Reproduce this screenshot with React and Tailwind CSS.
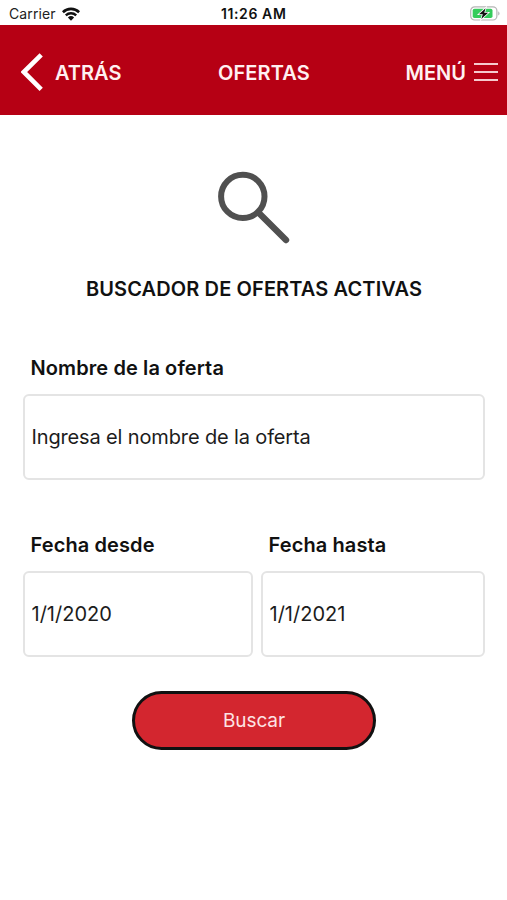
import React, { useState } from "react";

const StatusBar = () => (
  <div className="relative flex h-[25px] items-center justify-between bg-white pl-[9px] pr-[7px] pt-[2px]">
    <div className="flex items-center">
      <span className="text-[14px] leading-none tracking-[0.1px] text-[#222]">
        Carrier
      </span>
      <svg className="ml-[6px] h-[14px] w-[18px]" viewBox="0 0 18 14" fill="none">
        <path d="M0.9 5.2a11.6 11.6 0 0116.2 0" stroke="#111" strokeWidth="2.6" />
        <path d="M3.8 8.4a7.5 7.5 0 0110.4 0" stroke="#111" strokeWidth="2.4" />
        <path d="M9 13.7L5.9 10.5a4.5 4.5 0 016.2 0z" fill="#111" />
      </svg>
    </div>
    <span className="absolute left-[221px] top-[7px] text-[14px] font-semibold leading-none tracking-[0.6px] text-[#111]">
      11:26 AM
    </span>
    <svg className="h-[15px] w-[30px]" viewBox="0 0 30 15" fill="none">
      <rect x="0.7" y="0.8" width="26.2" height="13.2" rx="4" stroke="#b5b5b5" strokeWidth="1.2" />
      <path d="M28.2 5.2c1.8 0.8 1.8 3.6 0 4.4z" fill="#b5b5b5" />
      <rect x="2.7" y="2.7" width="19.8" height="9.4" rx="1.8" fill="#35cc5b" />
      <path
        d="M15.6 2.2L9 8.2h3.8l-1.5 4.8L18.1 6.8h-3.9z"
        fill="#111"
        stroke="#fff"
        strokeWidth="1.6"
        paintOrder="stroke"
      />
    </svg>
  </div>
);

const Header = () => (
  <header className="relative flex h-[90px] items-center justify-between bg-[#b60014] pl-[21px] pr-[9px] text-[20px] font-semibold leading-none text-[#fff0f1]">
    <button className="flex items-center pt-1">
      <svg className="h-[39px] w-[22px]" viewBox="0 0 22 39" fill="none">
        <path d="M20.2 1.8L2.8 19l17.4 17.4" stroke="#fff" strokeWidth="4.6" />
      </svg>
      <span className="ml-3 pt-[2px]">ATRÁS</span>
    </button>
    <h1 className="absolute left-[218px] top-[38px] tracking-[0.1px]">OFERTAS</h1>
    <button className="flex items-center pt-1">
      <span className="pt-[2px]">MENÚ</span>
      <svg className="ml-2 h-[18px] w-[24px]" viewBox="0 0 24 18" fill="none">
        <path d="M0 1h24M0 9h24M0 17h24" stroke="#f6c9cd" strokeWidth="1.8" />
      </svg>
    </button>
  </header>
);

const Field = ({ label, value, placeholder, onChange, className }) => (
  <label className={className}>
    <span className="block pl-[7.5px] text-[20px] font-semibold leading-[24px] tracking-[0.1px] text-[#111]">
      {label}
    </span>
    <input
      type="text"
      value={value}
      placeholder={placeholder}
      onChange={(e) => onChange(e.target.value)}
      className="mt-[14px] block h-[86px] w-full rounded-[6px] border-2 border-[#e4e4e4] px-[6.5px] text-[20px] text-[#1c1c1c] outline-none placeholder:tracking-[-0.14px] placeholder:text-[#1c1c1c]"
    />
  </label>
);

const App = () => {
  const [name, setName] = useState("");
  const [from, setFrom] = useState("1/1/2020");
  const [to, setTo] = useState("1/1/2021");

  return (
    <div className="h-[900px] w-[507px] overflow-hidden bg-white font-['Inter',sans-serif]">
      <StatusBar />
      <Header />
      <main className="flex flex-col pl-[23px] pr-[22px] pt-[56px]">
        {/* Search icon */}
        <svg className="h-[73px] w-[73px] self-center" viewBox="0 0 73 73" fill="none">
          <circle cx="24.8" cy="25.4" r="21.7" stroke="#505050" strokeWidth="6" />
          <path d="M41.4 42.4L68 69" stroke="#505050" strokeWidth="6.4" strokeLinecap="round" />
        </svg>
        <h2 className="mt-[33px] text-center text-[20px] font-semibold leading-[24px] tracking-[0.12px] text-[#111]">
          BUSCADOR DE OFERTAS ACTIVAS
        </h2>

        <Field
          className="mt-[55px] block"
          label="Nombre de la oferta"
          placeholder="Ingresa el nombre de la oferta"
          value={name}
          onChange={setName}
        />
        <div className="mt-[53px] flex gap-2">
          <Field className="block w-[230px]" label="Fecha desde" value={from} onChange={setFrom} />
          <Field className="block w-[224px]" label="Fecha hasta" value={to} onChange={setTo} />
        </div>

        <button className="mt-[34px] h-[59px] w-[244px] self-center rounded-full border-[3px] border-[#111] bg-[#d3262f] pt-[2px] text-[19px] tracking-[-0.1px] text-[#fde3e4]">
          Buscar
        </button>
      </main>
    </div>
  );
};

export default App;
